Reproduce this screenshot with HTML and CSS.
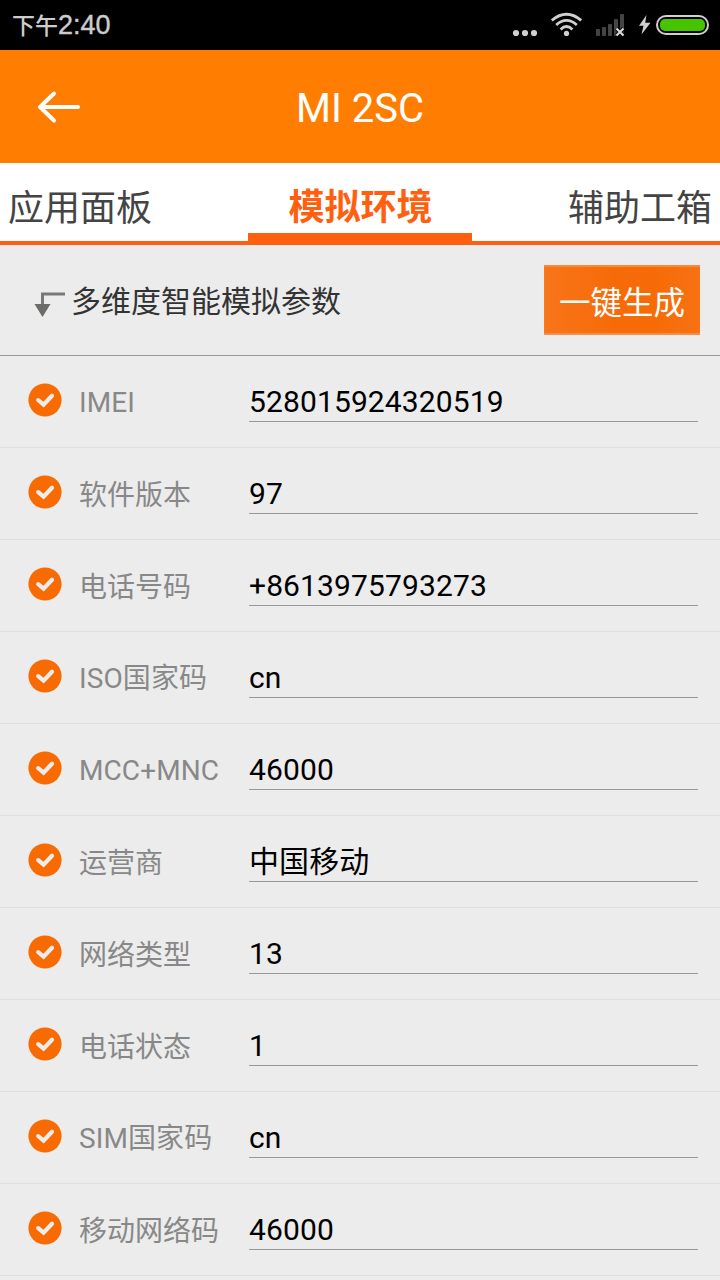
FILE: index.html
```
<!DOCTYPE html>
<html lang="zh-CN">
<head>
<meta charset="utf-8">
<title>MI 2SC</title>
<link rel="stylesheet" href="styles.css">
</head>
<body>
<svg class="defs" width="0" height="0" aria-hidden="true">
  <symbol id="check" viewBox="0 0 34 34">
    <circle cx="17" cy="17" r="16.6" fill="#f76b02"/>
    <path d="M10.2 17.2 15.6 21.6 24 12.8" fill="none" stroke="#ececec" stroke-width="4.2" stroke-linecap="round"/>
  </symbol>
</svg>
<div class="screen">
  <div class="status">
    <div class="clock">下午<span class="digits">2:40</span></div>
    <svg class="indicators" width="220" height="50" viewBox="0 0 220 50">
      <g fill="#d0d0d0">
        <circle cx="16" cy="33" r="3.1"/><circle cx="25" cy="33" r="3.1"/><circle cx="34" cy="33" r="3.1"/>
        <circle cx="66.5" cy="33.4" r="2.6"/>
      </g>
      <g fill="none" stroke="#d0d0d0" stroke-width="2.8">
        <path d="M60.6 29.4Q66.5 23.6 72.4 29.4"/>
        <path d="M56.2 25Q66.5 15.8 76.8 25"/>
        <path d="M51.8 20.4Q66.5 8.2 81.2 20.4"/>
      </g>
      <g fill="#444">
        <rect x="96" y="29" width="4" height="7" rx="1"/>
        <rect x="102" y="27" width="4" height="9" rx="1"/>
        <rect x="108" y="24" width="4" height="12" rx="1"/>
        <rect x="114" y="19" width="4" height="17" rx="1"/>
        <rect x="120" y="14" width="4" height="22" rx="1"/>
      </g>
      <path d="M116.5 28.5 123.5 35.5M123.5 28.5 116.5 35.5" stroke="#000" stroke-width="4"/>
      <path d="M116.5 28.5 123.5 35.5M123.5 28.5 116.5 35.5" stroke="#d8d8d8" stroke-width="2.2"/>
      <path d="M146.5 15 139 25.8H143.5L141.5 34.5 150.5 22.7H145.2Z" fill="#d0d0d0"/>
      <rect x="157" y="16" width="51" height="18" rx="9" fill="none" stroke="#d0d0d0" stroke-width="2"/>
      <rect x="160" y="19" width="45" height="12" rx="5" fill="#47c400"/>
    </svg>
  </div>
  <header class="header">
    <svg class="back" width="44" height="34" viewBox="0 0 44 34"><path d="M42 17H4M18 3.5 4 17 18 30.5" fill="none" stroke="#fff" stroke-width="4" stroke-linecap="round" stroke-linejoin="round"/></svg>
    <h1 class="title">MI 2SC</h1>
  </header>
  <nav class="tabs">
    <span class="tab">应用面板</span>
    <span class="tab active">模拟环境</span>
    <span class="tab last">辅助工箱</span>
  </nav>
  <section class="toolbar">
    <svg class="corner" width="32" height="28" viewBox="0 0 32 28"><path d="M31 4H8.5V15" fill="none" stroke="#777976" stroke-width="3"/><path d="M.5 14H16.5L8.5 27Z" fill="#6a6c69"/></svg>
    <h2 class="caption">多维度智能模拟参数</h2>
    <button class="generate">一键生成</button>
  </section>
  <main class="list">
    <div class="row"><svg class="mark"><use href="#check"/></svg><span class="label latin">IMEI</span><span class="value">528015924320519</span></div>
    <div class="row"><svg class="mark"><use href="#check"/></svg><span class="label">软件版本</span><span class="value">97</span></div>
    <div class="row"><svg class="mark"><use href="#check"/></svg><span class="label">电话号码</span><span class="value">+8613975793273</span></div>
    <div class="row"><svg class="mark"><use href="#check"/></svg><span class="label latin">ISO国家码</span><span class="value">cn</span></div>
    <div class="row"><svg class="mark"><use href="#check"/></svg><span class="label latin">MCC+MNC</span><span class="value">46000</span></div>
    <div class="row"><svg class="mark"><use href="#check"/></svg><span class="label">运营商</span><span class="value">中国移动</span></div>
    <div class="row"><svg class="mark"><use href="#check"/></svg><span class="label">网络类型</span><span class="value">13</span></div>
    <div class="row"><svg class="mark"><use href="#check"/></svg><span class="label">电话状态</span><span class="value">1</span></div>
    <div class="row"><svg class="mark"><use href="#check"/></svg><span class="label latin">SIM国家码</span><span class="value">cn</span></div>
    <div class="row"><svg class="mark"><use href="#check"/></svg><span class="label">移动网络码</span><span class="value">46000</span></div>
    <div class="row"></div>
  </main>
</div>
</body>
</html>
```
FILE: styles.css
```
* { box-sizing: border-box; }
body {
  margin: 0;
  background: #ececec;
  font-family: Roboto, "Noto Sans CJK SC", sans-serif;
}
.defs { position: absolute; }
.screen {
  width: 720px;
  height: 1280px;
  overflow: hidden;
  display: flex;
  flex-direction: column;
}
.status {
  flex: none;
  height: 50px;
  background: #000;
  display: flex;
  justify-content: space-between;
  padding-left: 12px;
}
.clock {
  color: #ccc;
  font-size: 23px;
  font-weight: 500;
  line-height: 50px;
  white-space: nowrap;
}
.digits { font-family: "Liberation Sans", sans-serif; font-size: 27px; font-weight: 400; -webkit-text-stroke: .4px #ccc; }
.indicators { flex: none; }
.header {
  flex: none;
  height: 113px;
  background: #ff7d00;
  display: grid;
  grid-template-columns: 120px 1fr 120px;
  align-items: center;
}
.back { margin-left: 36px; }
.title {
  margin: 0;
  padding-top: 4px;
  color: #fff;
  font-size: 40px;
  font-weight: 400;
  line-height: 60px;
  text-align: center;
}
.tabs {
  flex: none;
  height: 82px;
  background: #fff;
  border-bottom: 4px solid #ff6010;
  display: grid;
  grid-template-columns: 248px 224px 248px;
}
.tab {
  padding-left: 8px;
  color: #444;
  font-size: 36px;
  line-height: 92px;
  height: 78px;
  white-space: nowrap;
}
.tab.active {
  padding-left: 1px;
  line-height: 90px;
  color: #ff6010;
  font-weight: 700;
  text-align: center;
  border-bottom: 8px solid #ff6010;
}
.tab.last { padding: 0 8px 0 0; text-align: right; }
.toolbar {
  flex: none;
  height: 111px;
  border-bottom: 1px solid #999;
  display: flex;
  align-items: center;
  padding: 0 20px 0 34px;
}
.corner { margin: 7px 5px 0 0; }
.caption {
  flex: 1;
  margin: 0;
  color: #333;
  font-size: 30px;
  font-weight: 400;
  line-height: 40px;
  padding-top: 4px;
}
.generate {
  width: 156px;
  height: 70px;
  margin: 0;
  padding: 7px 0 0;
  border: 0;
  background: linear-gradient(90deg, #f87519, #f66b08 45%, #f66b06 70%, #f77214);
  box-shadow: inset 0 2px 1px #f88a3c, inset 0 -2px 1px #f59048;
  color: #fff;
  font-family: inherit;
  font-size: 31.5px;
  line-height: 60px;
}
.list { flex: none; }
.row {
  height: 92px;
  border-bottom: 1px solid #dedede;
  display: flex;
  align-items: flex-start;
  padding: 0 22px 0 28px;
}
.mark { width: 34px; height: 34px; margin-top: 27px; }
.label {
  width: 170px;
  margin: 28px 0 0 17px;
  color: #888;
  font-size: 28px;
  line-height: 40px;
  white-space: nowrap;
}
.label.latin { margin-top: 27px; letter-spacing: .1px; }
.value {
  flex: 1;
  height: 42px;
  margin-top: 24px;
  border-bottom: 1px solid #999;
  color: #000;
  font-size: 30px;
  line-height: 43px;
  letter-spacing: .12px;
  white-space: nowrap;
}
```
